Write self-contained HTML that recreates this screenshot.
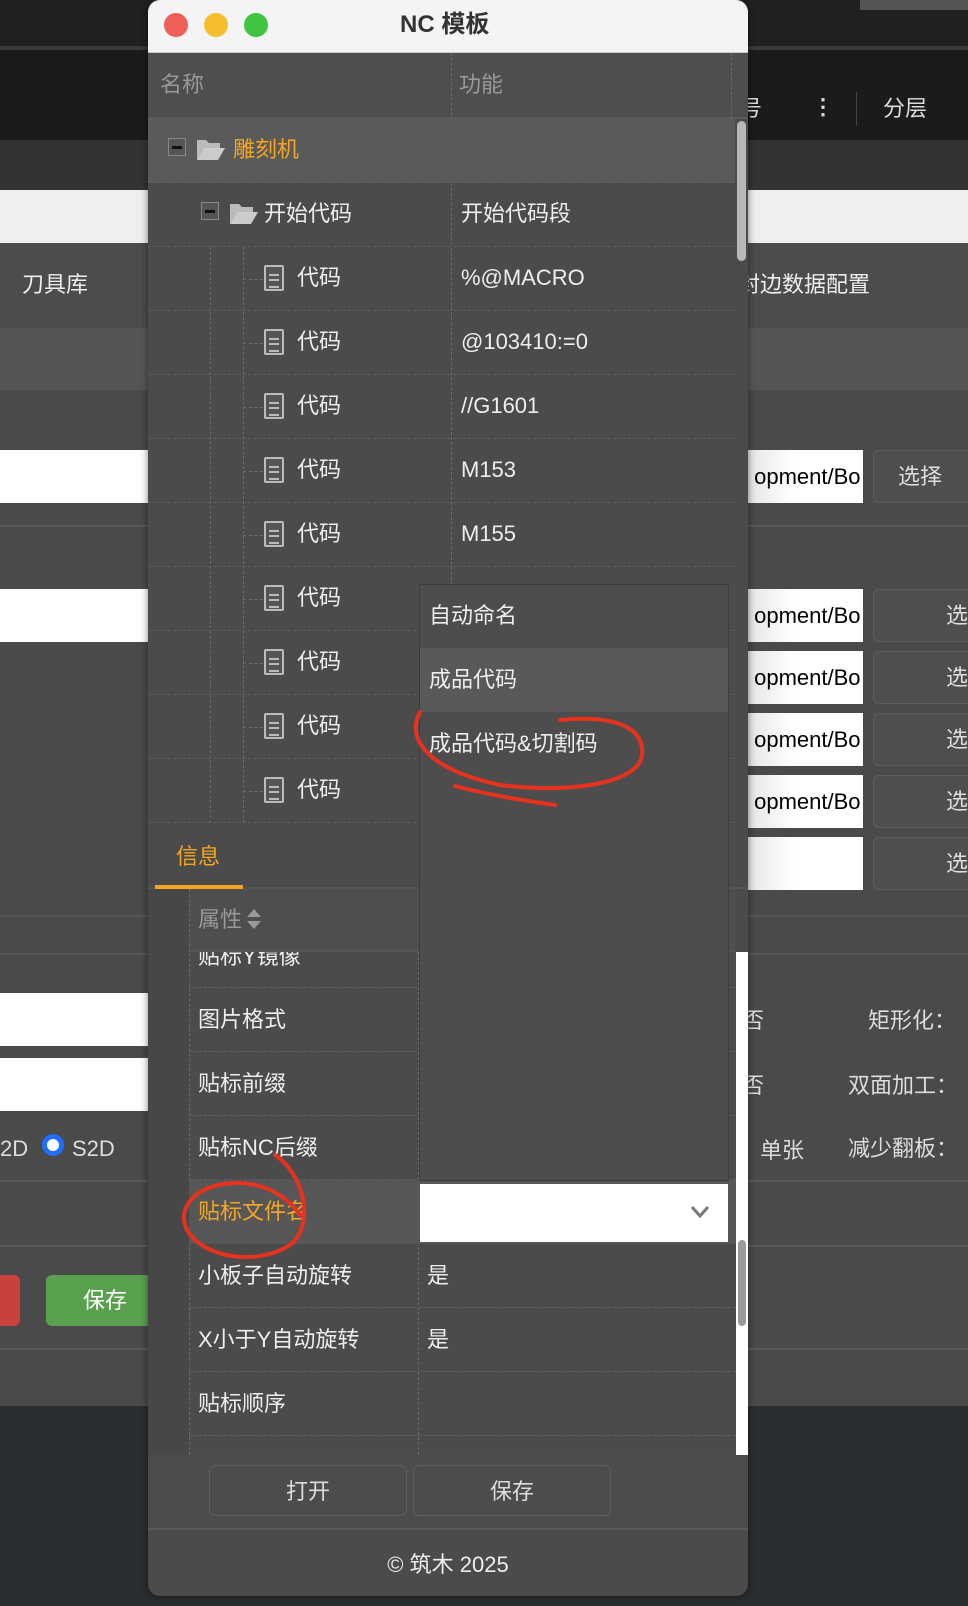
<!DOCTYPE html>
<html><head><meta charset="utf-8"><style>
*{margin:0;padding:0;box-sizing:border-box}
body{width:968px;height:1606px;overflow:hidden;position:relative;background:#4a4a4a;font-family:"Liberation Sans","Noto Sans CJK SC",sans-serif;color:#eee}
.a{position:absolute}
.t{position:absolute;font-size:22px;line-height:1;white-space:nowrap}
.inp{position:absolute;background:linear-gradient(90deg,#e6e6e6,#fff 40%);color:#000;font-size:22px;line-height:53px;overflow:hidden;white-space:nowrap}
.btn{position:absolute;border:1px solid #5e5e5e;border-radius:6px;background:#4e4e4e;color:#ddd;font-size:22px;line-height:51px;overflow:hidden}
.row{position:absolute;left:0;width:588px;height:64px;border-bottom:1px dashed #5e5e5e}
.vd{position:absolute;width:0;border-left:1px dashed #6a6a6a}
.hd{position:absolute;height:0;border-top:1px dashed #6a6a6a}
.file{position:absolute;width:20px;height:26px;border:2px solid #bbb;border-radius:2px;background:#555}
.file:after{content:"";position:absolute;left:3px;top:7px;width:10px;height:10px;border-top:2px solid #bbb;border-bottom:2px solid #bbb}
.file:before{content:"";position:absolute;left:3px;top:12px;width:10px;border-top:2px solid #bbb}
</style></head><body>
<div class="a" style="left:0;top:0;width:968px;height:46px;background:#202020"></div>
<div class="a" style="left:860px;top:0;width:108px;height:10px;background:#555"></div>
<div class="a" style="left:0;top:46px;width:968px;height:4px;background:#3a3a3a"></div>
<div class="a" style="left:0;top:50px;width:968px;height:90px;background:#1b1b1b"></div>
<div class="t" style="left:740px;top:98px;color:#ddd">号</div>
<div class="t" style="left:812px;top:96px;color:#ddd;font-weight:bold">⋮</div>
<div class="a" style="left:856px;top:92px;width:1px;height:34px;background:#444"></div>
<div class="t" style="left:883px;top:98px;color:#ddd">分层</div>
<div class="a" style="left:0;top:140px;width:968px;height:50px;background:#333"></div>
<div class="a" style="left:0;top:190px;width:968px;height:53px;background:#efefef"></div>
<div class="a" style="left:0;top:243px;width:968px;height:85px;background:#4c4c4c"></div>
<div class="t" style="left:22px;top:274px">刀具库</div>
<div class="t" style="left:738px;top:274px">封边数据配置</div>
<div class="a" style="left:0;top:328px;width:968px;height:62px;background:#555"></div>
<div class="a" style="left:0;top:525px;width:968px;height:2px;background:#575757"></div>
<div class="inp" style="left:0;top:450px;width:148px;height:53px;background:#fff"></div>
<div class="inp" style="left:0;top:589px;width:148px;height:53px;background:#fff"></div>
<div class="inp" style="left:0;top:993px;width:148px;height:53px;background:#fff"></div>
<div class="inp" style="left:0;top:1058px;width:148px;height:53px;background:#fff"></div>
<div class="inp" style="left:748px;top:450px;width:115px;height:53px">&nbsp;opment/Bo</div>
<div class="inp" style="left:748px;top:589px;width:115px;height:53px">&nbsp;opment/Bo</div>
<div class="inp" style="left:748px;top:651px;width:115px;height:53px">&nbsp;opment/Bo</div>
<div class="inp" style="left:748px;top:713px;width:115px;height:53px">&nbsp;opment/Bo</div>
<div class="inp" style="left:748px;top:775px;width:115px;height:53px">&nbsp;opment/Bo</div>
<div class="inp" style="left:748px;top:837px;width:115px;height:53px"></div>
<div class="btn" style="left:873px;top:450px;width:100px;height:53px;padding-left:24px">选择</div>
<div class="btn" style="left:873px;top:589px;width:100px;height:53px;padding-left:72px">选</div>
<div class="btn" style="left:873px;top:651px;width:100px;height:53px;padding-left:72px">选</div>
<div class="btn" style="left:873px;top:713px;width:100px;height:53px;padding-left:72px">选</div>
<div class="btn" style="left:873px;top:775px;width:100px;height:53px;padding-left:72px">选</div>
<div class="btn" style="left:873px;top:837px;width:100px;height:53px;padding-left:72px">选</div>
<div class="a" style="left:0;top:915px;width:968px;height:2px;background:#565656"></div>
<div class="a" style="left:0;top:953px;width:968px;height:2px;background:#565656"></div>
<div class="t" style="left:742px;top:1010px;color:#ddd">否</div>
<div class="t" style="left:868px;top:1010px;color:#ddd">矩形化：</div>
<div class="t" style="left:742px;top:1075px;color:#ddd">否</div>
<div class="t" style="left:848px;top:1075px;color:#ddd">双面加工：</div>
<div class="t" style="left:0;top:1138px;color:#ddd">2D</div>
<div class="a" style="left:42px;top:1134px;width:22px;height:22px;border-radius:50%;background:#fff;border:5px solid #1e6fff"></div>
<div class="t" style="left:72px;top:1138px;color:#ddd">S2D</div>
<div class="t" style="left:760px;top:1140px;color:#ddd">单张</div>
<div class="t" style="left:848px;top:1138px;color:#ddd">减少翻板：</div>
<div class="a" style="left:0;top:1180px;width:968px;height:2px;background:#585858"></div>
<div class="a" style="left:0;top:1245px;width:968px;height:2px;background:#585858"></div>
<div class="a" style="left:-10px;top:1275px;width:30px;height:51px;border-radius:6px;background:#c9403c"></div>
<div class="a" style="left:46px;top:1275px;width:110px;height:51px;border-radius:6px;background:#59a14f;color:#fff;font-size:22px;line-height:51px;padding-left:37px">保存</div>
<div class="a" style="left:0;top:1348px;width:968px;height:2px;background:#5a5a5a"></div>
<div class="a" style="left:0;top:1406px;width:968px;height:200px;background:#2a2e30"></div>

<div class="a" style="left:148px;top:0;width:600px;height:1596px;border-radius:12px;overflow:hidden;background:#4b4b4b;box-shadow:0 0 8px rgba(0,0,0,.5)">
 <div class="a" style="left:0;top:0;width:600px;height:53px;background:#f4f4f4;border-bottom:1px solid #ccc"></div>
 <div class="a" style="left:16px;top:13px;width:24px;height:24px;border-radius:50%;background:#ee5f57"></div>
 <div class="a" style="left:56px;top:13px;width:24px;height:24px;border-radius:50%;background:#f5bd2f"></div>
 <div class="a" style="left:96px;top:13px;width:24px;height:24px;border-radius:50%;background:#3fc53f"></div>
 <div class="t" style="left:252px;top:13px;color:#333;font-weight:bold;font-size:24px">NC 模板</div>
 <div class="a" style="left:0;top:53px;width:600px;height:66px;background:#4e4e4e;border-bottom:2px solid #5a5a5a"></div>
 <div class="t" style="left:12px;top:74px;color:#999">名称</div>
 <div class="t" style="left:311px;top:74px;color:#999">功能</div>
 <div class="vd" style="left:303px;top:53px;height:771px"></div>
 <div class="vd" style="left:583px;top:53px;height:66px"></div>
 <div class="row" style="top:119px;background:#5a5a5a"></div>
 <div class="a" style="left:20px;top:138px;width:18px;height:18px;border:1px solid #888;background:#555"><div class="a" style="left:3px;top:7px;width:10px;height:3px;background:#111"></div></div>
 <svg class="a" style="left:48px;top:136px" width="30" height="26"><path d="M1 4h9l3 3h11v5H8L1 24z" fill="#bbb"/><path d="M8 12h21l-7 12H1z" fill="#ccc"/></svg>
 <div class="t" style="left:85px;top:139px;color:#f5a623">雕刻机</div>
 <div class="row" style="top:183px"></div>
 <div class="a" style="left:53px;top:202px;width:18px;height:18px;border:1px solid #888;background:#555"><div class="a" style="left:3px;top:7px;width:10px;height:3px;background:#111"></div></div>
 <svg class="a" style="left:81px;top:200px" width="30" height="26"><path d="M1 4h9l3 3h11v5H8L1 24z" fill="#bbb"/><path d="M8 12h21l-7 12H1z" fill="#ccc"/></svg>
 <div class="t" style="left:116px;top:203px">开始代码</div>
 <div class="t" style="left:313px;top:203px">开始代码段</div>

 <div class="row" style="top:247px"></div><div class="row" style="top:311px"></div><div class="row" style="top:375px"></div>
 <div class="row" style="top:439px"></div><div class="row" style="top:503px"></div><div class="row" style="top:567px"></div>
 <div class="row" style="top:631px"></div><div class="row" style="top:695px"></div><div class="row" style="top:759px"></div>
 <div class="vd" style="left:62px;top:247px;height:576px"></div>
 <div class="vd" style="left:95px;top:247px;height:576px"></div>
 <div class="hd" style="left:95px;top:279px;width:20px"></div><div class="hd" style="left:95px;top:343px;width:20px"></div>
 <div class="hd" style="left:95px;top:407px;width:20px"></div><div class="hd" style="left:95px;top:471px;width:20px"></div>
 <div class="hd" style="left:95px;top:535px;width:20px"></div><div class="hd" style="left:95px;top:599px;width:20px"></div>
 <div class="hd" style="left:95px;top:663px;width:20px"></div><div class="hd" style="left:95px;top:727px;width:20px"></div>
 <div class="hd" style="left:95px;top:791px;width:20px"></div>
 <div class="file" style="left:116px;top:265px"></div><div class="file" style="left:116px;top:329px"></div>
 <div class="file" style="left:116px;top:393px"></div><div class="file" style="left:116px;top:457px"></div>
 <div class="file" style="left:116px;top:521px"></div><div class="file" style="left:116px;top:585px"></div>
 <div class="file" style="left:116px;top:649px"></div><div class="file" style="left:116px;top:713px"></div>
 <div class="file" style="left:116px;top:777px"></div>
 <div class="t" style="left:149px;top:267px">代码</div><div class="t" style="left:313px;top:267px">%@MACRO</div>
 <div class="t" style="left:149px;top:331px">代码</div><div class="t" style="left:313px;top:331px">@103410:=0</div>
 <div class="t" style="left:149px;top:395px">代码</div><div class="t" style="left:313px;top:395px">//G1601</div>
 <div class="t" style="left:149px;top:459px">代码</div><div class="t" style="left:313px;top:459px">M153</div>
 <div class="t" style="left:149px;top:523px">代码</div><div class="t" style="left:313px;top:523px">M155</div>
 <div class="t" style="left:149px;top:587px">代码</div>
 <div class="t" style="left:149px;top:651px">代码</div>
 <div class="t" style="left:149px;top:715px">代码</div>
 <div class="t" style="left:149px;top:779px">代码</div>
 <div class="a" style="left:587px;top:119px;width:13px;height:705px;background:#4b4b4b"></div>
 <div class="a" style="left:589px;top:121px;width:9px;height:140px;border-radius:5px;background:#b8b8b8"></div>
 <div class="a" style="left:0;top:824px;width:600px;height:65px;background:#4b4b4b;border-bottom:2px solid #555"></div>
 <div class="t" style="left:28px;top:846px;color:#f5a623">信息</div>
 <div class="a" style="left:7px;top:885px;width:88px;height:4px;background:#f5a623"></div>
 <div class="a" style="left:0;top:889px;width:41px;height:566px;background:#474747"></div>
 <div class="a" style="left:41px;top:889px;width:547px;height:63px;background:#4e4e4e;border-bottom:2px solid #555"></div>
 <div class="t" style="left:50px;top:909px;color:#999">属性</div>
 <svg class="a" style="left:98px;top:908px" width="16" height="22"><path d="M8 1l7 8H1z M8 21l7-8H1z" fill="#999"/></svg>
 <div class="vd" style="left:41px;top:889px;height:566px"></div>
 <div class="vd" style="left:270px;top:952px;height:503px"></div>
 <div class="a" style="left:41px;top:952px;width:547px;height:36px;overflow:hidden;border-bottom:1px dashed #5e5e5e"><div class="t" style="left:9px;top:-6px">贴标Y镜像</div></div>
 <div class="a" style="left:41px;top:988px;width:547px;height:64px;border-bottom:1px dashed #5e5e5e"></div>
 <div class="a" style="left:41px;top:1052px;width:547px;height:64px;border-bottom:1px dashed #5e5e5e"></div>
 <div class="a" style="left:41px;top:1116px;width:547px;height:64px;border-bottom:1px dashed #5e5e5e"></div>
 <div class="a" style="left:41px;top:1180px;width:547px;height:64px;background:#575757"></div>
 <div class="a" style="left:41px;top:1244px;width:547px;height:64px;border-bottom:1px dashed #5e5e5e"></div>
 <div class="a" style="left:41px;top:1308px;width:547px;height:64px;border-bottom:1px dashed #5e5e5e"></div>
 <div class="a" style="left:41px;top:1372px;width:547px;height:64px;border-bottom:1px dashed #5e5e5e"></div>
 <div class="t" style="left:50px;top:1009px">图片格式</div>
 <div class="t" style="left:50px;top:1073px">贴标前缀</div>
 <div class="t" style="left:50px;top:1137px">贴标NC后缀</div>
 <div class="t" style="left:50px;top:1201px;color:#f5a623">贴标文件名</div>
 <div class="t" style="left:50px;top:1265px">小板子自动旋转</div><div class="t" style="left:279px;top:1265px">是</div>
 <div class="t" style="left:50px;top:1329px">X小于Y自动旋转</div><div class="t" style="left:279px;top:1329px">是</div>
 <div class="t" style="left:50px;top:1393px">贴标顺序</div>
 <div class="a" style="left:272px;top:1184px;width:308px;height:58px;background:#fff"></div>
 <svg class="a" style="left:542px;top:1205px" width="20" height="14"><path d="M2 2l8 9 8-9" stroke="#777" stroke-width="3" fill="none"/></svg>
 <div class="a" style="left:588px;top:952px;width:12px;height:503px;background:#fff"></div>
 <div class="a" style="left:590px;top:1240px;width:8px;height:86px;border-radius:4px;background:#9a9a9a"></div>
 <div class="a" style="left:0;top:1455px;width:600px;height:73px;background:#4c4c4c"></div>
 <div class="btn" style="left:61px;top:1465px;width:198px;height:51px;text-align:center;background:#4c4c4c">打开</div>
 <div class="btn" style="left:265px;top:1465px;width:198px;height:51px;text-align:center;background:#4c4c4c">保存</div>
 <div class="a" style="left:0;top:1528px;width:600px;height:2px;background:#5a5a5a"></div>
 <div class="t" style="left:0;top:1554px;width:600px;text-align:center">© 筑木 2025</div>
 <div class="a" style="left:271px;top:584px;width:310px;height:597px;background:#4d4d4d;border:1px solid #3c3c3c"></div>
 <div class="t" style="left:281px;top:605px">自动命名</div>
 <div class="a" style="left:272px;top:648px;width:308px;height:64px;background:#595959"></div>
 <div class="t" style="left:281px;top:669px">成品代码</div>
 <div class="t" style="left:281px;top:733px">成品代码&amp;切割码</div>
</div>
<svg class="a" style="left:0;top:0" width="968" height="1606">
 <path d="M420 712 C 405 740 430 770 500 785 C 580 795 640 780 642 755 C 645 725 610 715 560 720 M455 786 C 490 795 520 800 555 805" stroke="#e8321e" stroke-width="4" fill="none" stroke-linecap="round"/>
 <path d="M275 1155 C 305 1175 315 1225 290 1245 C 260 1265 205 1260 187 1230 C 175 1205 200 1182 240 1183 C 270 1184 290 1200 300 1215" stroke="#e8321e" stroke-width="4" fill="none" stroke-linecap="round"/>
</svg>
</body></html>
